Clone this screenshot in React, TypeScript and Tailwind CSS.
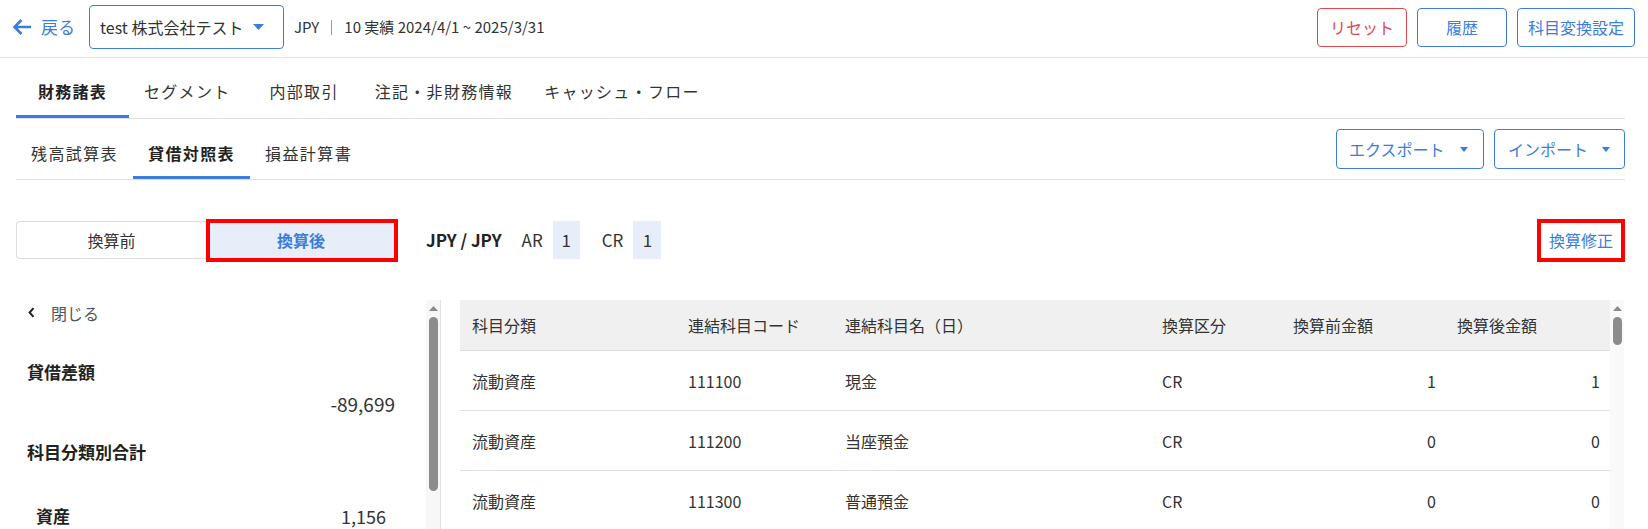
import React from "react";

const BLUE = "text-[#3b7ddd]";

function Tri({ w, h, className }: { w: number; h: number; className?: string }) {
  return (
    <svg width={w} height={h} viewBox={`0 0 ${w} ${h}`} className={className}>
      <polygon points={`0,0 ${w},0 ${w / 2},${h}`} fill="currentColor" />
    </svg>
  );
}

function UpTri() {
  return (
    <svg width="9" height="5" viewBox="0 0 9 5">
      <polygon points="0,5 9,5 4.5,0" fill="#8a8a8a" />
    </svg>
  );
}

const cols = "grid grid-cols-[216px_157px_317px_131px_164px_165px]";

const rows = [
  ["流動資産", "111100", "現金", "CR", "1", "1"],
  ["流動資産", "111200", "当座預金", "CR", "0", "0"],
  ["流動資産", "111300", "普通預金", "CR", "0", "0"],
];

const mainTabs = [
  { t: "セグメント", c: "pl-[15px] pr-[21px]" },
  { t: "内部取引", c: "px-[18px]" },
  { t: "注記・非財務情報", c: "pl-[18px] pr-[13px]" },
  { t: "キャッシュ・フロー", c: "px-[18px]" },
];

export default function App() {
  return (
    <div className="w-[1648px] h-[529px] overflow-hidden bg-white font-['Noto_Sans_CJK_JP',sans-serif] text-[#333]">
      {/* Header */}
      <header className="h-[58px] border-b border-[#e3e3e3] flex items-center pl-[12px] pr-[13px] pb-[3px]">
        <svg width="20" height="18" viewBox="0 0 20 18" className="text-[#3b7ddd]">
          <path d="M19 9H2.5M9.5 2L2.5 9L9.5 16" fill="none" stroke="currentColor" strokeWidth="2.6" />
        </svg>
        <span className={`ml-[9px] text-[17px] ${BLUE}`}>戻る</span>
        <div className="ml-[14px] w-[195px] h-[44px] border border-[#3b7ddd] rounded-[4px] flex items-center pl-[10px] pr-[19px] justify-between">
          <span className="text-[16px] text-[#333]">test 株式会社テスト</span>
          <Tri w={11} h={6} className="text-[#3b7ddd]" />
        </div>
        <span className="ml-[10px] text-[15px] text-[#333]">JPY</span>
        <span className="mx-[12px] w-px h-[15px] bg-[#9a9a9a]" />
        <span className="text-[15px] text-[#333]">10 実績 2024/4/1 ~ 2025/3/31</span>
        <div className="ml-auto flex gap-[10px]">
          <button className="w-[90px] h-[39px] border border-[#e0474c] rounded-[4px] text-[16px] text-[#e5484d]">リセット</button>
          <button className="w-[90px] h-[39px] border border-[#3b7ddd] rounded-[4px] text-[16px] text-[#3b7ddd]">履歴</button>
          <button className="w-[118px] h-[39px] border border-[#3b7ddd] rounded-[4px] text-[16px] text-[#3b7ddd]">科目変換設定</button>
        </div>
      </header>

      <div className="pl-[16px] pr-[23px]">
        {/* Main tabs */}
        <div className="pt-[13px] border-b border-[#e0e0e0] flex">
          <div className="w-[113px] h-[47px] border-b-[3px] border-[#3b7ddd] flex items-center justify-center pb-[4px] text-[16px] tracking-[1.3px] font-bold text-[#222]">
            財務諸表
          </div>
          {mainTabs.map(({ t, c }) => (
            <div key={t} className={`h-[47px] border-b-[3px] border-transparent ${c} flex items-center pb-[4px] text-[16px] tracking-[1.3px] text-[#333]`}>
              {t}
            </div>
          ))}
        </div>

        {/* Sub tabs */}
        <div className="h-[61px] border-b border-[#e0e0e0] flex">
          <div className="flex self-end">
            <div className="h-[44px] px-[15px] pb-[6px] border-b-[3px] border-transparent flex items-center text-[16px] tracking-[1.4px]">残高試算表</div>
            <div className="h-[44px] px-[15px] pb-[6px] border-b-[3px] border-[#3b7ddd] flex items-center text-[16px] tracking-[1.4px] font-bold text-[#222]">貸借対照表</div>
            <div className="h-[44px] px-[15px] pb-[6px] border-b-[3px] border-transparent flex items-center text-[16px] tracking-[1.4px]">損益計算書</div>
          </div>
          <div className="ml-auto self-center flex gap-[10px]">
            <button className="w-[148px] h-[40px] border border-[#3b7ddd] rounded-[4px] flex items-center pl-[12px] text-[16px] text-[#3b7ddd]">
              エクスポート
              <Tri w={8} h={5} className="ml-[15px] text-[#3b7ddd]" />
            </button>
            <button className="w-[131px] h-[40px] border border-[#3b7ddd] rounded-[4px] flex items-center pl-[13px] text-[16px] text-[#3b7ddd]">
              インポート
              <Tri w={8} h={5} className="ml-[14px] text-[#3b7ddd]" />
            </button>
          </div>
        </div>

        {/* Toggle row */}
        <div className="mt-[41px] flex items-center h-[38px]">
          <div className="flex">
            <div className="w-[190px] h-[38px] border border-[#dcdcdc] border-r-0 rounded-l-[4px] flex items-center justify-center text-[16px] text-[#333]">
              換算前
            </div>
            <div className="relative w-[190px] h-[38px] bg-[#e8eef9] flex items-center justify-center text-[16px] font-bold text-[#3b7ddd]">
              換算後
              <div className="absolute left-0 -right-[2px] -top-[2px] -bottom-[3px] border-[4px] border-[#ff0000]" />
            </div>
          </div>
          <span className="ml-[30px] text-[17px] font-bold text-[#222]">JPY / JPY</span>
          <span className="ml-[20px] text-[17px] text-[#333]">AR</span>
          <span className="ml-[10px] w-[27px] h-[38px] bg-[#e8eef9] flex items-center justify-center text-[17px]">1</span>
          <span className="ml-[22px] text-[17px] text-[#333]">CR</span>
          <span className="ml-[10px] w-[28px] h-[38px] bg-[#e8eef9] flex items-center justify-center text-[17px]">1</span>
          <div className="ml-auto h-[43px] border-[4px] border-[#ff0000] px-[8px] flex items-center text-[16px] text-[#3b7ddd]">
            換算修正
          </div>
        </div>

        {/* Content */}
        <div className="mt-[41px] flex h-[229px]">
          {/* Left panel */}
          <div className="w-[425px] flex">
            <div className="flex-1 flex flex-col">
              <div className="h-[28px] flex items-center pl-[12px]">
                <svg width="7" height="11" viewBox="0 0 7 11">
                  <path d="M5.5 1.2L1.6 5.5L5.5 9.8" fill="none" stroke="#222" strokeWidth="2" />
                </svg>
                <span className="ml-[16px] text-[16px] text-[#555]">閉じる</span>
              </div>
              <div className="mt-[35px] h-[24px] flex items-center pl-[11px] text-[17px] font-bold text-[#222]">貸借差額</div>
              <div className="mt-[7px] h-[26px] flex items-center justify-end pr-[31px] text-[19px] text-[#333]">-89,699</div>
              <div className="mt-[23px] h-[24px] flex items-center pl-[11px] text-[17px] font-bold text-[#222]">科目分類別合計</div>
              <div className="mt-[39px] h-[26px] flex items-center justify-between pl-[20px] pr-[40px]">
                <span className="text-[17px] font-bold text-[#222]">資産</span>
                <span className="text-[18px] text-[#333]">1,156</span>
              </div>
            </div>
            <div className="w-[15px] bg-[#f7f7f7] border-r border-[#e2e2e2] flex flex-col items-center pt-[6px]">
              <UpTri />
              <div className="mt-[6px] w-[9px] h-[174px] rounded-full bg-[#8c8c8c]" />
            </div>
          </div>

          {/* Table */}
          <div className="ml-[19px] flex flex-1">
            <div className="w-[1150px]">
              <div className={`${cols} h-[51px] bg-[#f0f0f0] border-b border-[#dcdcdc] text-[16px] text-[#333]`}>
                {["科目分類", "連結科目コード", "連結科目名（日）", "換算区分", "換算前金額", "換算後金額"].map((h) => (
                  <div key={h} className="flex items-center pl-[12px]">{h}</div>
                ))}
              </div>
              {rows.map((r, i) => (
                <div key={i} className={`${cols} h-[60px] border-b border-[#e0e0e0] text-[16px] text-[#333]`}>
                  <div className="flex items-center pl-[12px]">{r[0]}</div>
                  <div className="flex items-center pl-[12px]">{r[1]}</div>
                  <div className="flex items-center pl-[12px]">{r[2]}</div>
                  <div className="flex items-center pl-[12px]">{r[3]}</div>
                  <div className="flex items-center justify-end pr-[9px]">{r[4]}</div>
                  <div className="flex items-center justify-end pr-[10px]">{r[5]}</div>
                </div>
              ))}
            </div>
            <div className="w-[14px] bg-[#f9f9f9] flex flex-col items-center pt-[6px]">
              <UpTri />
              <div className="mt-[6px] w-[9px] h-[28px] rounded-full bg-[#8c8c8c]" />
            </div>
          </div>
        </div>
      </div>
    </div>
  );
}
